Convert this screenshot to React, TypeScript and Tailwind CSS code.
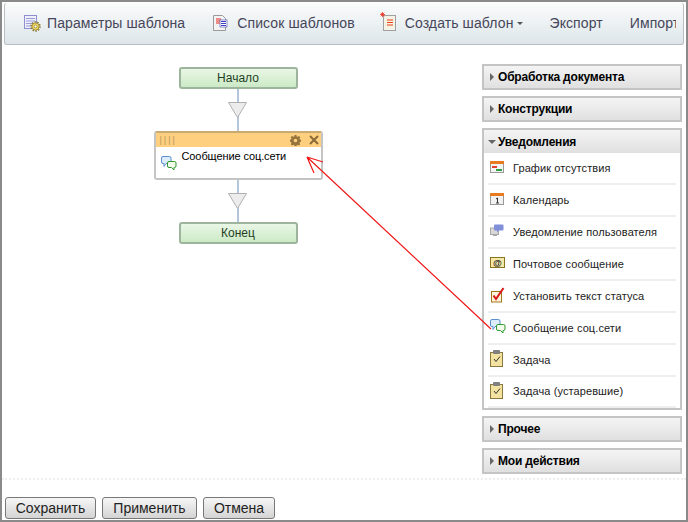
const sans = "font-['Liberation_Sans',Arial,sans-serif]";

function ParamsIcon() {
  return (
    <svg width="17" height="17" viewBox="0 0 17 17">
      <rect x="0.5" y="0.5" width="12" height="13" fill="#eef0fb" stroke="#8f8fd0" />
      <path d="M2 3.5h9M2 6h9M2 8.5h6M2 11h5" stroke="#9a9ad8" />
      <circle cx="11.5" cy="11.500" r="4.500" fill="none" stroke="#8a7a30" strokeWidth="1.500" strokeDasharray="1.500 1.300" />
      <circle cx="11.5" cy="11.5" r="3.600" fill="#f0d860" stroke="#8a7a30" strokeWidth="0.700" />
      <circle cx="11.5" cy="11.5" r="1.4" fill="#fff" stroke="#8a7a30" strokeWidth="0.7" />
    </svg>
  );
}

function ListIcon() {
  return (
    <svg width="15" height="17" viewBox="0 0 15 17">
      <path d="M0.5 0.5h9l3 3v12h-12z" fill="#f3f3f3" stroke="#9a9a9a" />
      <path d="M3 4h5M3 6h5M3 8h5" stroke="#e8281c" />
      <rect x="7" y="5" width="7" height="7" fill="#ffffff" stroke="#4848b8" strokeWidth="0.6" />
      <path d="M8 6.5h5M8 8.5h5M8 10.5h5" stroke="#4040c0" />
    </svg>
  );
}

function CreateIcon() {
  return (
    <svg width="17" height="19" viewBox="0 0 17 19">
      <rect x="3.5" y="3.5" width="12" height="15" fill="#f5f2e6" stroke="#a0a0a0" />
      <path d="M7 8h6M7 10.5h6M7 13h6" stroke="#ee4010" />
      <path d="M2.5 0v5M0 2.5h5M0.8 0.8l3.4 3.4M4.2 0.8l-3.4 3.4" stroke="#e83018" strokeWidth="0.8" />
    </svg>
  );
}

function ChatIcon() {
  return (
    <svg width="16" height="15" viewBox="0 0 16 15">
      <path d="M2 0.5h6.5a1.5 1.5 0 0 1 1.5 1.5v4a1.5 1.5 0 0 1-1.5 1.5H5l-2 3v-3H2A1.5 1.5 0 0 1 0.5 6V2A1.5 1.5 0 0 1 2 0.5z" fill="#dcecfb" stroke="#5b8fd0" />
      <path d="M8 5.5h5.500A1.500 1.500 0 0 1 15 7v3a1.500 1.500 0 0 1-1.500 1.500H13v2.500l-2.500-2.500H8A1.500 1.500 0 0 1 6.500 10V7A1.500 1.500 0 0 1 8 5.500z" fill="#f2fbea" stroke="#2f9a2f" />
    </svg>
  );
}

function RowIcon({ kind }: { kind: string }) {
  if (kind === "absence")
    return (
      <svg width="14" height="12" viewBox="0 0 14 12">
        <rect x="0.500" y="0.500" width="13" height="11" fill="#f4f4f4" stroke="#999" />
        <rect width="14" height="3" fill="#e87a20" />
        <rect x="2" y="5" width="5" height="2" fill="#e04030" />
        <rect x="6" y="8" width="6" height="2" fill="#30a040" />
      </svg>
    );
  if (kind === "calendar")
    return (
      <svg width="14" height="12" viewBox="0 0 14 12">
        <rect x="0.500" y="0.500" width="13" height="11" fill="#f2f2f2" stroke="#999" />
        <rect width="14" height="3" fill="#e87a20" />
        <path d="M7.500 5v5M6 6l1.500-1M6 10h3" stroke="#333" fill="none" />
      </svg>
    );
  if (kind === "notify")
    return (
      <svg width="14" height="13" viewBox="0 0 14 13">
        <rect x="0.500" y="4" width="8" height="6.500" fill="#d8d8d8" stroke="#a8a8a8" />
        <path d="M3 11.500h4" stroke="#a8a8a8" />
        <path d="M5 0.500h7.500a1 1 0 0 1 1 1v4a1 1 0 0 1-1 1H9l-2 2v-2H5a1 1 0 0 1-1-1v-4a1 1 0 0 1 1-1z" fill="#7f8fd8" />
      </svg>
    );
  if (kind === "mail")
    return (
      <svg width="15" height="11" viewBox="0 0 15 11">
        <rect x="0.500" y="0.500" width="14" height="10" fill="#f6e9a8" stroke="#8a7420" />
        <text x="7.500" y="8.500" fontSize="9" fontWeight="bold" textAnchor="middle" fill="#222">@</text>
      </svg>
    );
  if (kind === "status")
    return (
      <svg width="15" height="16" viewBox="0 0 15 16">
        <rect x="1.500" y="4.500" width="10" height="10.500" fill="#fff6dc" stroke="#a07820" />
        <path d="M3.500 8.500l2.500 3.500L13.500 1" fill="none" stroke="#d81818" strokeWidth="2" />
      </svg>
    );
  if (kind === "chat") return <ChatIcon />;
  return (
    <svg width="13" height="17" viewBox="0 0 13 17">
      <rect x="0.500" y="2.500" width="12" height="14" fill="#f4e3a0" stroke="#8a7840" />
      <rect x="3" y="0" width="7" height="4" rx="1" fill="#808080" />
      <path d="M4 9l2 2.500L10 6.500" fill="none" stroke="#333" />
    </svg>
  );
}

function Triangle() {
  return (
    <svg width="20" height="16" viewBox="0 0 20 16" className="block -ml-[10px] absolute">
      <path d="M0.500 0.500h18L9.500 15.500z" fill="#ececec" stroke="#b0b0b0" />
    </svg>
  );
}

function Connector() {
  return (
    <div className="h-[42px] w-[2px] bg-[#b4c6dc] relative">
      <div className="absolute left-[1px] top-[13px]">
        <Triangle />
      </div>
    </div>
  );
}

function EndNode({ label }: { label: string }) {
  return (
    <div className="w-[119px] h-[22px] rounded-[3px] border-2 border-[#9db59d] bg-gradient-to-b from-[#eaf6e6] to-[#cbeac6] flex items-center justify-center text-[12px] text-[#1f3f1f]">
      {label}
    </div>
  );
}

function SectionHeader({ label, open }: { label: string; open?: boolean }) {
  return (
    <div className={`${open ? "h-[23px]" : "h-[22px]"} flex items-center pl-[6px] bg-gradient-to-b from-[#f4f4f4] to-[#e0e0e0] text-[12px] font-bold tracking-[-0.2px] text-black`}>
      {open ? (
        <span className="-ml-[2px] w-0 h-0 border-x-[4px] border-x-transparent border-t-[4px] border-t-[#666] mr-[2px]" />
      ) : (
        <span className="w-0 h-0 border-y-[4px] border-y-transparent border-l-[4px] border-l-[#666] mr-[4px]" />
      )}
      {label}
    </div>
  );
}

const rows = [
  { kind: "absence", label: "График отсутствия" },
  { kind: "calendar", label: "Календарь" },
  { kind: "notify", label: "Уведомление пользователя" },
  { kind: "mail", label: "Почтовое сообщение" },
  { kind: "status", label: "Установить текст статуса" },
  { kind: "chat", label: "Сообщение соц.сети" },
  { kind: "task", label: "Задача" },
  { kind: "task", label: "Задача (устаревшие)" },
];

function Button({ label, width }: { label: string; width: string }) {
  return (
    <button className={`${width} h-[22px] rounded-[3px] border border-[#777] bg-gradient-to-b from-[#f6f6f6] to-[#d4d4d4] text-[14px] text-[#222] flex items-center justify-center`}>
      {label}
    </button>
  );
}

export default function App() {
  return (
    <div className={`${sans} relative w-[688px] h-[522px] bg-white border-2 border-[#8a8a8a] overflow-hidden flex flex-col`}>
      {/* Toolbar */}
      <div className="mx-[2px] mt-[1px] h-[42px] shrink-0 rounded-[3px] border-b border-x border-[#b8bec2] bg-gradient-to-b from-[#fbfcfc] to-[#dde6ea] flex items-center pl-[19px] text-[14px] tracking-[0.1px] text-[#46465a] overflow-hidden whitespace-nowrap">
        <ParamsIcon />
        <span className="ml-[6px]">Параметры шаблона</span>
        <span className="ml-[28px]"><ListIcon /></span>
        <span className="ml-[9px]">Список шаблонов</span>
        <span className="ml-[25px] -mt-[4px]"><CreateIcon /></span>
        <span className="ml-[8px]">Создать шаблон</span>
        <span className="ml-[4px] w-0 h-0 border-x-[3px] border-x-transparent border-t-[3px] border-t-[#555]" />
        <span className="ml-[26px]">Экспорт</span>
        <span className="ml-[27px] w-[46px] overflow-hidden">Импорт</span>
      </div>

      <div className="flex flex-1 min-h-0">
        {/* Canvas */}
        <div className="w-[480px] shrink-0 flex flex-col items-center pt-[22px] pr-[8px]">
          <EndNode label="Начало" />
          <Connector />
          <div className="w-[169px] h-[49px] rounded-[3px] border-2 border-[#c4c4c4] border-t-[#c9ab72] overflow-hidden bg-white">
            <div className="h-[14px] bg-[#fdcf7e] flex items-center pl-[4px] pr-[2px] text-[#b8945a]">
              <span className="text-[9px] tracking-[2px] leading-none">||||</span>
              <svg width="11" height="11" viewBox="0 0 24 24" className="ml-auto" fill="#96743c">
                <path d="M10 1h4l.6 3 2.400 1 2.600-1.700 2.800 2.800L20.700 8.700l1 2.300 3 .6v4l-3 .6-1 2.400 1.700 2.600-2.800 2.800-2.600-1.700-2.400 1-.6 3h-4l-.6-3-2.400-1-2.600 1.700-2.800-2.800 1.700-2.600-1-2.400-3-.6v-4l3-.6 1-2.300-1.700-2.600 2.800-2.800L7 5l2.400-1zM12 9a4 4 0 1 0 0 8 4 4 0 0 0 0-8z" transform="translate(0 -1)" />
              </svg>
              <svg width="10" height="10" viewBox="0 0 10 10" className="ml-[8px]" stroke="#8a6a38" strokeWidth="2">
                <path d="M1 1l8 8M9 1l-8 8" />
              </svg>
            </div>
            <div className="flex pl-[5px] text-[11px] tracking-[-0.1px] text-black">
              <span className="mt-[9px]"><ChatIcon /></span>
              <span className="ml-[5px] mt-[1px]">Сообщение соц.сети</span>
            </div>
          </div>
          <Connector />
          <EndNode label="Конец" />
        </div>

        {/* Activity panel */}
        <div className="w-[200px] shrink-0 pt-[19px] flex flex-col gap-[6px]">
          <div className="border-2 border-[#c4c4c4]"><SectionHeader label="Обработка документа" /></div>
          <div className="border-2 border-[#c4c4c4]"><SectionHeader label="Конструкции" /></div>
          <div className="border-2 border-[#c4c4c4]">
            <SectionHeader label="Уведомления" open />
            <div className="px-[4px]">
              {rows.map((row) => (
                <div key={row.label} className="h-[32px] last:h-[31px] flex items-center border-b-2 border-[#eeeeee] text-[11px] tracking-[0.1px] text-[#222]">
                  <span className="w-[25px] pl-[2px] -mt-[3px] shrink-0"><RowIcon kind={row.kind} /></span>
                  {row.label}
                </div>
              ))}
            </div>
          </div>
          <div className="border-2 border-[#c4c4c4]"><SectionHeader label="Прочее" /></div>
          <div className="border-2 border-[#c4c4c4]"><SectionHeader label="Мои действия" /></div>
        </div>
      </div>

      {/* Footer */}
      <div className="h-[42px] shrink-0 flex flex-col">
        <div className="border-t-2 border-dotted border-[#eeeeee]" />
        <div className="flex gap-[6px] pl-[3px] pt-[17px]">
          <Button label="Сохранить" width="w-[91px]" />
          <Button label="Применить" width="w-[95px]" />
          <Button label="Отмена" width="w-[72px]" />
        </div>
      </div>

      {/* Annotation arrow */}
      <svg className="absolute left-[-2px] top-[-2px] pointer-events-none" width="688" height="522" viewBox="0 0 688 522">
        <path d="M491 329L307 157M307 157l16 5M307 157l7 16" fill="none" stroke="#f01818" strokeWidth="1.2" />
      </svg>
    </div>
  );
}
